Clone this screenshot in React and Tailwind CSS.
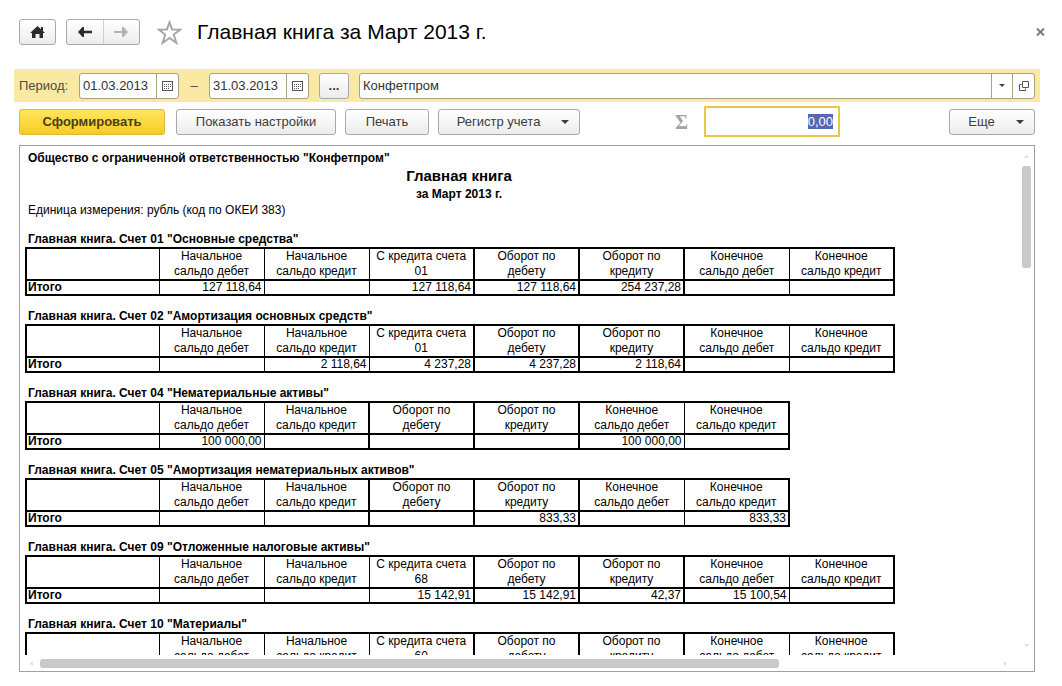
import { useEffect, useRef } from 'react'

const START = ['Начальное сальдо дебет', 'Начальное сальдо кредит']
const TURNOVER = ['Оборот по дебету', 'Оборот по кредиту']
const END = ['Конечное сальдо дебет', 'Конечное сальдо кредит']

const accounts = [
  {
    title: 'Главная книга. Счет 01 "Основные средства"',
    credit: ['С кредита счета 01'],
    totals: ['127 118,64', '', '127 118,64', '127 118,64', '254 237,28', '', ''],
  },
  {
    title: 'Главная книга. Счет 02 "Амортизация основных средств"',
    credit: ['С кредита счета 01'],
    totals: ['', '2 118,64', '4 237,28', '4 237,28', '2 118,64', '', ''],
  },
  {
    title: 'Главная книга. Счет 04 "Нематериальные активы"',
    credit: [],
    totals: ['100 000,00', '', '', '', '100 000,00', ''],
  },
  {
    title: 'Главная книга. Счет 05 "Амортизация нематериальных активов"',
    credit: [],
    totals: ['', '', '', '833,33', '', '833,33'],
  },
  {
    title: 'Главная книга. Счет 09 "Отложенные налоговые активы"',
    credit: ['С кредита счета 68'],
    totals: ['', '', '15 142,91', '15 142,91', '42,37', '15 100,54', ''],
  },
  {
    title: 'Главная книга. Счет 10 "Материалы"',
    credit: ['С кредита счета 60'],
    totals: ['', '', '', '', '', '', ''],
  },
]

const buttonStyle =
  'flex items-center justify-center rounded-[3px] border border-[#a9a9ad] bg-linear-to-b from-white to-[#ececec] text-[#3c3c3c]'

function Caret({ className }) {
  return (
    <svg viewBox="0 0 8 4" className={className} fill="currentColor" aria-hidden="true">
      <path d="M0 0h8L4 4z" />
    </svg>
  )
}

function CalendarIcon() {
  return (
    <svg width="11" height="10" viewBox="0 0 11 10" aria-hidden="true" shapeRendering="crispEdges">
      <path d="M.5 .5h10v9H.5z" fill="none" stroke="#555" />
      <path d="M2 3.5h7M2 5.5h7M2 7.5h5" stroke="#555" strokeDasharray="1 1" />
    </svg>
  )
}

function DateField({ label, value }) {
  return (
    <div className="flex h-[26px] w-[100px] overflow-hidden rounded-[3px] border border-[#a8a287] bg-white">
      <input
        type="text"
        aria-label={label}
        defaultValue={value}
        className="w-0 flex-1 pl-[3px] text-[13px] text-[#333] outline-none"
      />
      <button
        type="button"
        aria-label="Выбрать дату"
        className="flex w-[22px] items-center justify-center border-l border-[#a8a287]"
      >
        <CalendarIcon />
      </button>
    </div>
  )
}

function TitleBar() {
  return (
    <header className="flex h-[26px] items-center pr-[17px] pl-[19px]">
      <button type="button" aria-label="Домой" className={`${buttonStyle} h-[26px] w-[37px]`}>
        <svg width="15" height="12" viewBox="0 0 15 12" fill="#2b2b2b" aria-hidden="true">
          <path d="M7.5 0L11 3.200V1h2v4l2 2h-2v5H9.500V8h-4v4H2V7H0z" />
        </svg>
      </button>
      <div className="ml-[10px] flex h-[26px] w-[74px] overflow-hidden rounded-[3px] border border-[#a9a9ad] bg-linear-to-b from-white to-[#ececec]">
        <button type="button" aria-label="Назад" className="flex flex-1 items-center justify-center">
          <svg width="14" height="10" viewBox="0 0 14 10" fill="#2b2b2b" aria-hidden="true">
            <path d="M4.500 0H6v3.700h8v2.600H6V10H4.500L0 5z" />
          </svg>
        </button>
        <button
          type="button"
          aria-label="Вперед"
          className="flex flex-1 items-center justify-center border-l border-[#cfcfcf]"
        >
          <svg width="14" height="10" viewBox="0 0 14 10" fill="#b3b3b3" aria-hidden="true">
            <path d="M9.500 0H8v3.900H0v2.200h8V10h1.500L14 5z" />
          </svg>
        </button>
      </div>
      <button type="button" aria-label="В избранное" className="ml-[17px]">
        <svg width="25" height="25" viewBox="0 0 25 25" fill="none" stroke="#a5a5a5" strokeWidth="1.900" aria-hidden="true">
          <path d="M12.500 2.300l2.700 7.300h8.200l-6.600 4.900 2.600 8.400-6.900-5-6.900 5 2.600-8.400L1.600 9.600h8.200z" />
        </svg>
      </button>
      <h1 className="ml-[15px] text-[21px] text-black">Главная книга за Март 2013 г.</h1>
      <button type="button" aria-label="Закрыть" className="ml-auto">
        <svg width="9" height="8" viewBox="0 0 9 8" stroke="#7d7d7d" strokeWidth="2" aria-hidden="true">
          <path d="M1 .5l7 7M8 .5l-7 7" />
        </svg>
      </button>
    </header>
  )
}

function PeriodBar() {
  return (
    <div className="mt-6 mr-[22px] ml-[14px] flex h-[33px] items-center bg-[#f9e9a2] px-[5px] text-[13px] text-[#4d4a3a]">
      <span className="w-[60px]">Период:</span>
      <DateField label="Начало периода" value="01.03.2013" />
      <span className="w-[30px] text-center">–</span>
      <DateField label="Конец периода" value="31.03.2013" />
      <button
        type="button"
        aria-label="Выбрать период"
        className={`${buttonStyle} ml-[10px] h-[26px] w-[30px] font-bold`}
      >
        ...
      </button>
      <div className="ml-[10px] flex h-[26px] flex-1 overflow-hidden rounded-[3px] border border-[#a8a287] bg-white">
        <input
          type="text"
          aria-label="Организация"
          defaultValue="Конфетпром"
          className="w-0 flex-1 pl-[3px] text-[13px] text-[#333] outline-none"
        />
        <button
          type="button"
          aria-label="Выбрать из списка"
          className="flex w-[21px] items-center justify-center border-l border-[#a8a287] text-[#444]"
        >
          <Caret className="h-[3px] w-[6px]" />
        </button>
        <button
          type="button"
          aria-label="Открыть"
          className="flex w-[22px] items-center justify-center border-l border-[#a8a287]"
        >
          <svg width="10" height="10" viewBox="0 0 10 10" fill="none" stroke="#555" aria-hidden="true">
            <path d="M3.500 .5h6v6h-6zM2.500 3.500h-2v6h6v-2" />
          </svg>
        </button>
      </div>
    </div>
  )
}

function Toolbar() {
  const sumRef = useRef(null)

  useEffect(() => {
    sumRef.current.focus()
    sumRef.current.select()
  }, [])

  return (
    <div className="mt-[4px] flex h-[31px] items-center pr-[27px] pl-[19px] text-[13px]">
      <button
        type="button"
        className="h-[26px] w-[146px] rounded-[3px] border border-[#dcb93c] bg-linear-to-b from-[#ffe65c] to-[#f8cb1c] font-bold text-[#4a3f10]"
      >
        Сформировать
      </button>
      <button type="button" className={`${buttonStyle} ml-[11px] h-[26px] w-[160px]`}>
        Показать настройки
      </button>
      <button type="button" className={`${buttonStyle} ml-[9px] h-[26px] w-[84px]`}>
        Печать
      </button>
      <button type="button" className={`${buttonStyle} ml-[9px] h-[26px] w-[142px] gap-[21px] pl-[8px]`}>
        Регистр учета
        <Caret className="h-[4px] w-[8px]" />
      </button>
      <label htmlFor="sum" className="ml-[95px] w-[29px] font-['Liberation_Serif',serif] text-xl font-bold text-[#a3a3a3]">
        Σ
      </label>
      <input
        id="sum"
        ref={sumRef}
        type="text"
        defaultValue="0,00"
        className="h-[31px] w-[136px] border-2 border-[#e8c840] bg-white pr-[5px] text-right outline-none selection:bg-[#5468b4] selection:text-white"
      />
      <button type="button" className={`${buttonStyle} ml-auto h-[26px] w-[86px] gap-[21px] pl-[8px]`}>
        Еще
        <Caret className="h-[4px] w-[8px]" />
      </button>
    </div>
  )
}

function AccountTable({ account }) {
  const columns = [...START, ...account.credit, ...TURNOVER, ...END]
  // only the opening and closing balance pairs are split by a thin line
  const isThin = (i) => i < START.length + account.credit.length - 1 || i === columns.length - 2
  const edge = (i) => (isThin(i) ? 'border-r' : 'border-r-2')

  return (
    <section className="pb-[12px]">
      <h3 className="pl-[3px] leading-[16px] font-bold">{account.title}</h3>
      <table className="table-fixed border-collapse border-2 border-black">
        <colgroup>
          <col className="w-[133px]" />
          {columns.map((name) => (
            <col key={name} className="w-[105px]" />
          ))}
        </colgroup>
        <thead>
          <tr className="border-b-2 border-black">
            <td className="border-r border-black" />
            {columns.map((name, i) => (
              <th
                key={name}
                scope="col"
                className={`${edge(i)} border-black px-[4px] text-center align-top leading-[15px] font-normal`}
              >
                {name}
              </th>
            ))}
          </tr>
        </thead>
        <tbody>
          <tr>
            <th scope="row" className="border-r border-black pl-[1px] text-left leading-[13px] font-bold">
              Итого
            </th>
            {account.totals.map((total, i) => (
              <td key={columns[i]} className={`${edge(i)} border-black pr-[2px] text-right leading-[13px]`}>
                {total}
              </td>
            ))}
          </tr>
        </tbody>
      </table>
    </section>
  )
}

function Report() {
  return (
    <main className="mt-[8px] mr-[27px] mb-[14px] ml-[19px] flex min-h-0 flex-1 flex-col border border-[#a0a0a0] text-xs text-black">
      <div className="flex min-h-0 flex-1">
        <div className="min-w-0 flex-1 overflow-hidden pt-[4px] pl-[5px]">
          <p className="pl-[3px] leading-[16px] font-bold">
            Общество с ограниченной ответственностью "Конфетпром"
          </p>
          <div className="w-[868px] text-center font-bold">
            <h2 className="text-[15px] leading-[20px]">Главная книга</h2>
            <p className="leading-[16px]">за Март 2013 г.</p>
          </div>
          <p className="pl-[3px] leading-[16px]">Единица измерения: рубль (код по ОКЕИ 383)</p>
          <div className="pt-[13px]">
            {accounts.map((account) => (
              <AccountTable key={account.title} account={account} />
            ))}
          </div>
        </div>
        <div className="flex w-[12px] flex-col items-center pt-[9px] pr-[3px] pb-[8px] text-[#d8d8d8]">
          <Caret className="h-[3px] w-[5px] rotate-180" />
          <div className="mt-[8px] h-[102px] w-[9px] rounded-[3px] bg-[#c9c9c9]" />
          <Caret className="mt-auto h-[3px] w-[5px]" />
        </div>
      </div>
      <div className="flex h-[16px] items-center pr-[26px] pl-[9px] text-[#d8d8d8]">
        <Caret className="h-[3px] w-[5px] rotate-90" />
        <div className="ml-[6px] h-[9px] w-[739px] rounded-[3px] bg-[#c9c9c9]" />
        <Caret className="ml-auto h-[3px] w-[5px] -rotate-90" />
      </div>
    </main>
  )
}

export default function App() {
  return (
    <div className="flex h-screen flex-col overflow-hidden bg-white pt-[19px] font-['Liberation_Sans',Arial,sans-serif]">
      <TitleBar />
      <PeriodBar />
      <Toolbar />
      <Report />
    </div>
  )
}
